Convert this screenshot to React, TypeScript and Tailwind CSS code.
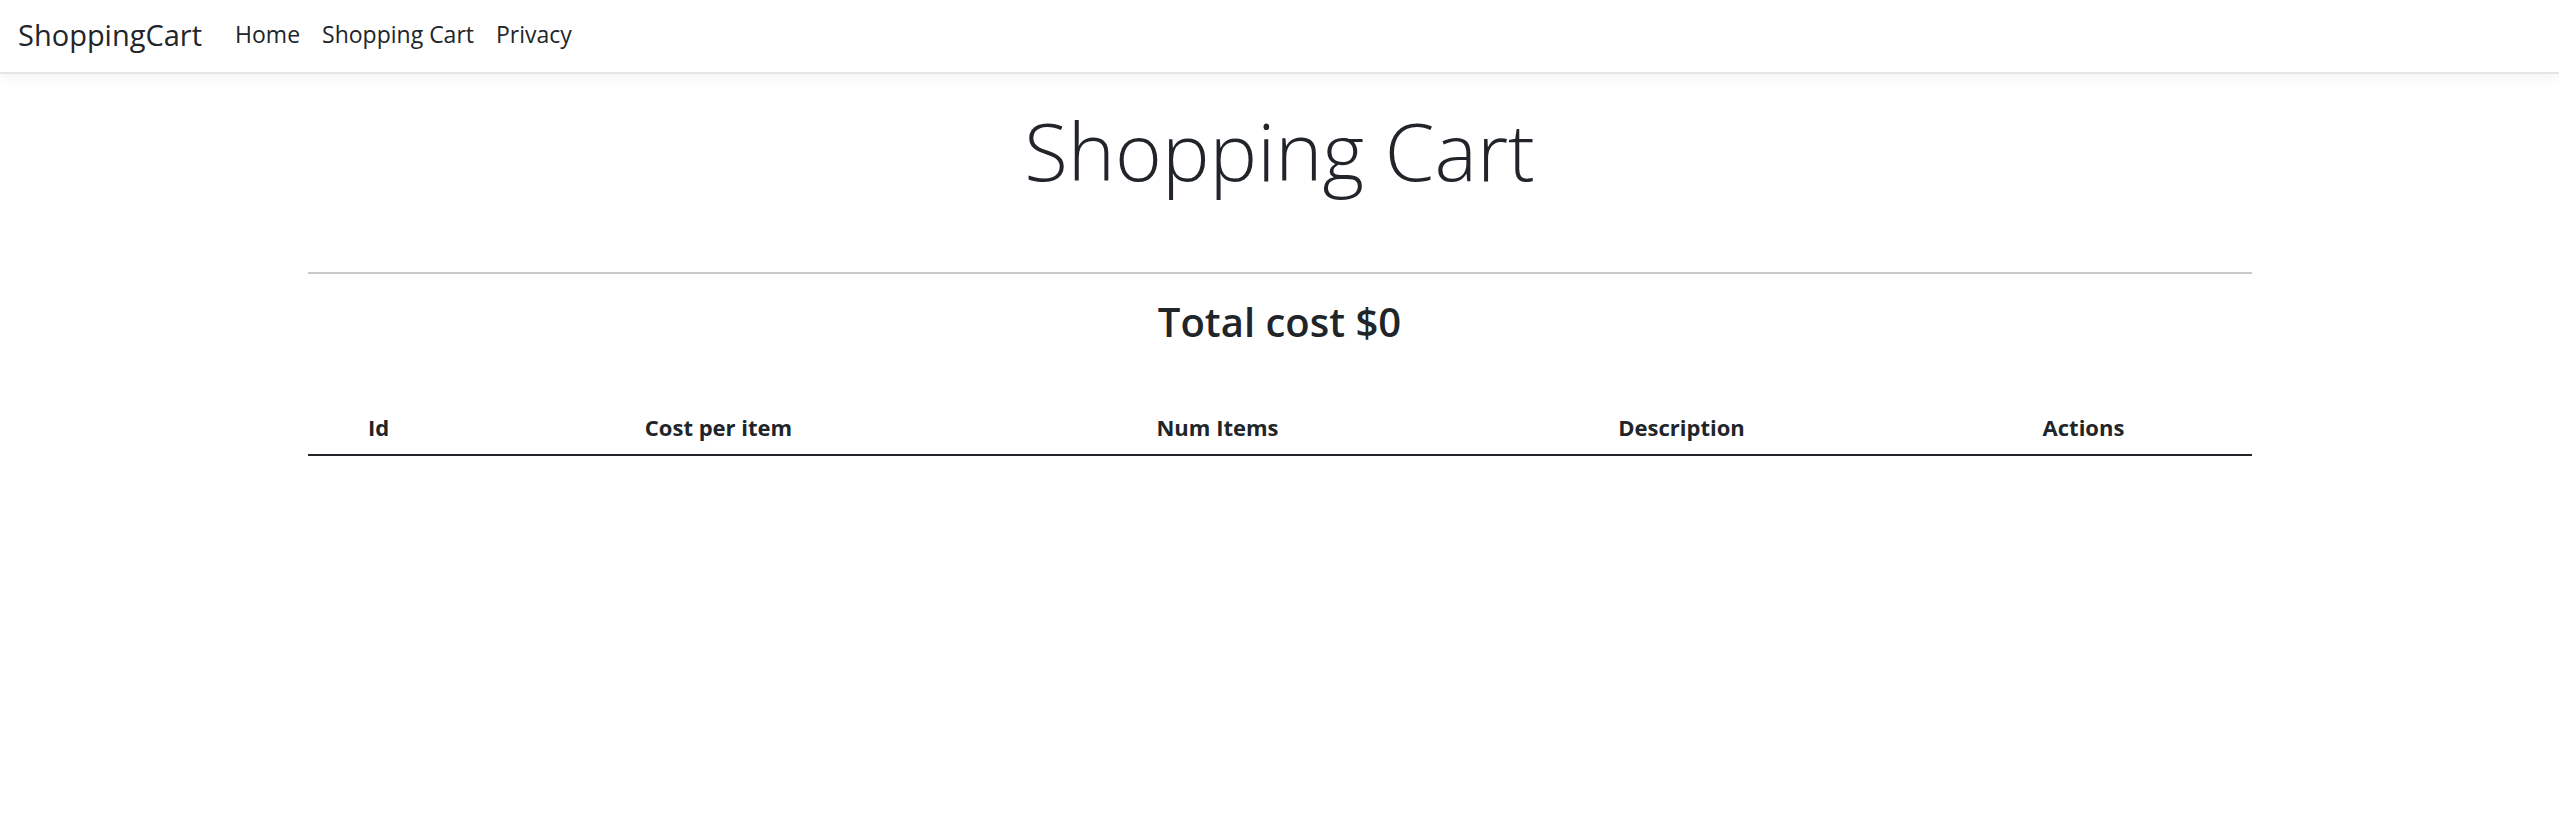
export default function App() {
    return (
        <div className="min-h-[826px] bg-white text-[#212529] font-['Open_Sans','Noto_Sans',sans-serif]">
            <Navbar></Navbar>
            <main className="w-[1944px] mx-auto">
                <h1 className="mt-[28px] text-center text-[80px] leading-[1.2] font-light">Shopping Cart</h1>
                <div className="mt-[74px] border-t-2 border-[#c8c9ca]"></div>
                <h2 className="mt-[24px] text-center text-[40px] leading-[1.2] font-semibold">Total cost $0</h2>
                <CartTable></CartTable>
            </main>
        </div>
    )
}

const Navbar = function () {
    return (
        <nav className="h-[74px] flex items-center pl-[18px] pb-[3px] border-b-2 border-[#e5e5e5] shadow-[0_4px_12px_rgba(0,0,0,0.05)]">
            <div className="text-[29px] mr-[22px]">ShoppingCart</div>
            <div className="flex text-[23px]">
                <a className="px-[11px]">Home</a>
                <a className="px-[11px]">Shopping Cart</a>
                <a className="px-[11px]">Privacy</a>
            </div>
        </nav>
    )
}

const CartTable = function () {
    const cols = [
        { label: 'Id', w: 'w-[142px]' },
        { label: 'Cost per item', w: 'w-[538px]' },
        { label: 'Num Items', w: 'w-[460px]' },
        { label: 'Description', w: 'w-[468px]' },
        { label: 'Actions', w: 'w-[336px]' },
    ]
    return (
        <table className="mt-[50px] w-full table-fixed border-collapse">
            <thead>
                <tr className="border-b-2 border-[#212529]">
                    {cols.map((c) => (
                        <th key={c.label} className={c.w + ' pt-[15px] pb-[10px] text-center text-[22px] leading-[1.5] font-bold'}>
                            {c.label}
                        </th>
                    ))}
                </tr>
            </thead>
            <tbody></tbody>
        </table>
    )
}
